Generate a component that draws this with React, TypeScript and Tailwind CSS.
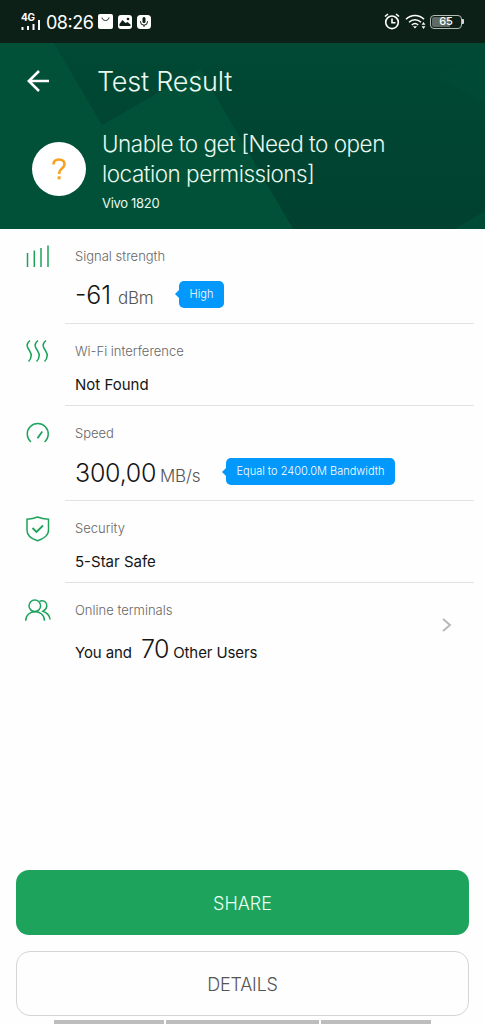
import type { ReactNode } from "react";

type RowProps = { icon: ReactNode; label: string; height: string; last?: boolean; children: ReactNode };

function StatusBar() {
  return (
    <div className="h-[43px] bg-[#0d2018] flex items-center justify-between pl-[21px] pr-[21px] text-white">
      <div className="flex items-center">
        <div className="w-[20px] h-[18px] flex flex-col">
          <span className="text-[10px] leading-[9px] font-bold tracking-[-0.3px]">4G</span>
          <svg className="-mt-[4px]" width="20" height="13" viewBox="0 0 20 13" fill="currentColor">
            <path d="M.5 9h2v3h-2zM6 8h2v4H6zM11.5 6h2v6h-2zM17 2h2v10h-2z" />
          </svg>
        </div>
        <span className="ml-[5px] mt-[2px] w-[47px] text-[18px] leading-6 tracking-[-0.5px] whitespace-nowrap">08:26</span>
        <div className="ml-[5px] flex items-center gap-[5px]">
          <svg width="15" height="15" viewBox="0 0 15 15">
            <rect width="15" height="15" rx="2" fill="#fff" />
            <path d="M4 3.5c.5 4 6.500 4 7 0" fill="none" stroke="#0d2018" strokeWidth="1" />
          </svg>
          <svg width="14" height="14" viewBox="0 0 14 14">
            <rect width="14" height="14" rx="3" fill="#fff" />
            <path d="M1.500 11V9l3-4 3 3 2-1 3 2.500V11z" fill="#0d2018" />
            <circle cx="10" cy="4" r="1.300" fill="#0d2018" />
          </svg>
          <svg width="14" height="14" viewBox="0 0 14 14" fill="none" stroke="#0d2018">
            <rect width="14" height="14" rx="3.500" fill="#fff" stroke="none" />
            <rect x="5.500" y="2" width="3" height="6" rx="1.500" fill="#0d2018" stroke="none" />
            <path d="M3.500 6v.7a3.500 3.500 0 0 0 7 0V6M7 10v2" />
          </svg>
        </div>
      </div>
      <div className="flex items-center">
        <svg width="16" height="17" viewBox="0 0 16 17" fill="none" stroke="#fff" strokeWidth="1.600">
          <circle cx="8" cy="9.300" r="6.300" />
          <path d="M8 5.500v4.300h3.500M1 3.500 4 1M15 3.500 12 1" />
        </svg>
        <svg className="ml-[5px]" width="21" height="16" viewBox="0 0 21 16" fill="none" stroke="#fff" strokeWidth="1.500">
          <path d="M1 5.300c5-5 13-5 18 0M4 8.300c3.500-3.300 8.500-3.300 12 0M6.800 11c2-1.800 4.400-1.800 6.400 0" />
          <path d="m10 14.500-2-2.300h4zM18.500 8l1.900 2.700h-3.800zM18.500 15l1.900-2.700h-3.800z" fill="#fff" stroke="none" />
        </svg>
        <div className="ml-[4px] flex items-center">
          <div className="w-[32px] h-[14px] rounded-[4px] border border-[#b5bcb8] p-px">
            <div className="w-full h-full rounded-[2px] bg-[linear-gradient(90deg,#5e6a64_63%,transparent_63%)] flex items-center justify-center text-[11px] leading-none font-medium">65</div>
          </div>
          <span className="w-[2px] h-[5px] bg-[#d5dad7] rounded-r-[1px]" />
        </div>
      </div>
    </div>
  );
}

function Header() {
  return (
    <header className="relative h-[186px] bg-[#004532] text-[#e9f8f0]">
      <svg className="absolute inset-0" width="485" height="186" viewBox="0 0 485 186">
        <defs>
          <linearGradient id="base" x1="0" y1="0" x2="0" y2="1">
            <stop offset="0" stopColor="#004934" />
            <stop offset="1" stopColor="#004130" />
          </linearGradient>
        </defs>
        <rect width="485" height="186" fill="url(#base)" />
        <path d="M0 0H54L102 82 200 26 293 186H0z" fill="#005137" />
        <path d="M436 33 485 7V60z" fill="#004a35" />
        <path d="M455 186 485 168V186z" fill="#004b35" />
      </svg>
      <div className="relative">
        <div className="h-[76px] flex items-center pl-[27px]">
          <svg width="22" height="22" viewBox="0 0 22 22" fill="none" stroke="#fff" strokeWidth="2.600">
            <path d="M22 11H2M12 1 1.800 11 12 21" />
          </svg>
          <h1 className="ml-[48px] mt-[2px] text-[27px] leading-8 font-light tracking-[-0.2px]">Test Result</h1>
        </div>
        <div className="flex pl-[32px]">
          <div className="mt-[23px] w-[54px] h-[54px] rounded-full bg-white flex items-center justify-center">
            <svg width="14" height="22" viewBox="0 0 14 22" fill="none" stroke="#f6a122" strokeWidth="2.600">
              <path d="M1.500 6.500C1.500 3 3.500 1.500 7 1.500s5.500 2 5.500 4.700c0 4.200-5.300 4.300-5.300 8.800v1" />
              <path d="M5.600 18.300h3v3h-3z" fill="#f6a122" stroke="none" />
            </svg>
          </div>
          <div className="ml-[16px] mt-[10px]">
            <p className="text-[22.500px] leading-[30px] font-light tracking-[-0.5px]">Unable to get [Need to open<br />location permissions]</p>
            <p className="mt-[5px] text-[13px] leading-[18px] tracking-[-0.3px]">Vivo 1820</p>
          </div>
        </div>
      </div>
    </header>
  );
}

function Row({ icon, label, height, last, children }: RowProps) {
  return (
    <div className={`${height} flex`}>
      <div className="w-[65px] shrink-0 pl-[24px] pt-[14px]">{icon}</div>
      <div className={`w-[409px] pl-[10px] pt-[17px] flex flex-col ${last ? "" : "border-b border-[#e2e2e2]"}`}>
        <p className="text-[13px] leading-5 font-[350] text-[#666]">{label}</p>
        {children}
      </div>
    </div>
  );
}

function Tag({ children, className }: { children: ReactNode; className: string }) {
  return (
    <div className={`flex items-center ${className}`}>
      <svg width="4" height="8" viewBox="0 0 4 8"><path d="M4 0v8L0 4z" fill="#0398fb" /></svg>
      <span className="flex-1 h-[27px] rounded-[5px] bg-[#0398fb] text-[11px] leading-[27px] font-light text-white text-center whitespace-nowrap">{children}</span>
    </div>
  );
}

const stroke = { fill: "none", stroke: "#1da35c", strokeWidth: 1.5 };

export default function App() {
  return (
    <div className="w-[485px] h-[1024px] overflow-hidden bg-[#fefefe] flex flex-col font-['Inter',sans-serif] [font-feature-settings:'case'] text-[#151515]">
      <StatusBar />
      <Header />
      <main className="flex-1">
        <Row height="h-[95px]" label="Signal strength" icon={
          <svg width="28" height="26" viewBox="0 0 28 26" {...stroke}><path d="M3.500 10v14M10.300 7.500V24M17 5v19M24 2.500V24" /></svg>
        }>
          <div className="mt-[12px] flex items-center">
            <span className="w-[38px] text-[25px] leading-[34px] font-[350] whitespace-nowrap">-61</span>
            <span className="ml-[5px] mt-[5px] w-[35px] text-[17px] leading-6 font-light tracking-[-0.3px] text-[#555]">dBm</span>
            <Tag className="ml-[22px] -mt-[2px] w-[49px]">High</Tag>
          </div>
        </Row>
        <Row height="h-[82px]" label="Wi-Fi interference" icon={
          <svg width="28" height="26" viewBox="0 0 28 26" {...stroke}>
            <path d="M6 2.500C1 6.500 3.500 9.500 5.700 13S8 20 4.500 23.500M14 2.500C9 6.500 11.500 9.500 13.700 13S16 20 12.500 23.500M22 2.500C17 6.500 19.500 9.500 21.700 13S24 20 20.500 23.500" />
          </svg>
        }>
          <p className="mt-[12px] text-[15px] leading-6 font-[370]">Not Found</p>
        </Row>
        <Row height="h-[95px]" label="Speed" icon={
          <svg width="28" height="26" viewBox="0 0 28 26" {...stroke}>
            <path d="M6.900 22A10.500 10.500 0 1 1 20.600 22" /><path d="m13.500 18.300 4.800-6.900" strokeWidth="1.800" />
          </svg>
        }>
          <div className="mt-[13px] flex items-center">
            <span className="w-[80px] text-[25px] leading-[34px] tracking-[-0.25px] font-[350] whitespace-nowrap">300,00</span>
            <span className="ml-[5px] mt-[5px] w-[40px] text-[17px] leading-6 font-light tracking-[-0.2px] text-[#555] whitespace-nowrap">MB/s</span>
            <Tag className="ml-[22px] -mt-[3px] w-[173px]">Equal to 2400.0M Bandwidth</Tag>
          </div>
        </Row>
        <Row height="h-[82px]" label="Security" icon={
          <svg width="28" height="28" viewBox="0 0 28 28" {...stroke}>
            <path d="M13.500 2C10 3.500 7 4 3 4.200v11c0 5 5 8.800 10.500 10.500C19 24 24.500 20.200 24.500 15.200v-11C20 4 17 3.500 13.500 2z" />
            <path d="m8.500 13 4 4 6.500-6.500" strokeWidth="1.800" />
          </svg>
        }>
          <p className="mt-[12px] text-[15px] leading-6 font-[370]">5-Star Safe</p>
        </Row>
        <Row height="h-[90px]" last label="Online terminals" icon={
          <svg width="28" height="26" viewBox="0 0 28 26" {...stroke}>
            <circle cx="10.800" cy="8.800" r="5.800" />
            <path d="M1.700 23.800c0-12 18.800-12 18.800 0M15.500 4.200c7.500-2.500 10 6.300 3.500 10 4.500 1.500 6.500 4 7.200 8.300" />
          </svg>
        }>
          <div className="flex justify-between">
            <p className="mt-[12px] text-[15px] leading-[34px] font-[370] tracking-[-0.1px] whitespace-nowrap">You and <span className="ml-[5px] text-[25px] font-light tracking-[-0.5px]">70</span> Other Users</p>
            <svg className="mr-[22px] -mt-[2px]" width="10" height="14" viewBox="0 0 10 14" fill="none" stroke="#b8b8b8" strokeWidth="2"><path d="m1 1 7 6-7 6" /></svg>
          </div>
        </Row>
      </main>
      <footer className="px-[16px]">
        <button className="block w-full h-[65px] rounded-[13px] bg-[#1da35c] pt-[2px] text-[18px] font-light text-[#e9fff2]">SHARE</button>
        <button className="block mt-[16px] w-full h-[65px] rounded-[14px] border border-[#d5d5d5] pt-[2px] text-[18px] font-light tracking-[-0.2px] text-[#555]">DETAILS</button>
        <div className="mt-[4px] h-[4px] ml-[38px] flex gap-[2px]">
          <span className="w-[110px] bg-[#bdbdbd]" />
          <span className="w-[153px] bg-[#bdbdbd]" />
          <span className="w-[110px] bg-[#bdbdbd]" />
        </div>
      </footer>
    </div>
  );
}
